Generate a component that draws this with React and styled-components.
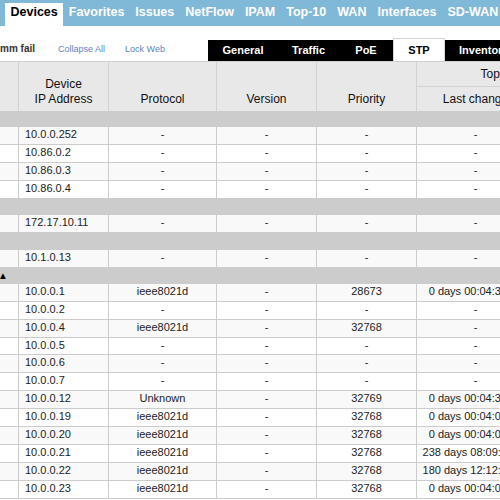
import React from 'react';
import styled, { createGlobalStyle } from 'styled-components';

const GlobalStyle = createGlobalStyle`
  html, body {
    margin: 0;
    padding: 0;
    background: #fff;
    overflow: hidden;
  }
  body {
    font-family: "Liberation Sans", Arial, sans-serif;
  }
`;

const COLS = '19px 90px 108px 100px 100px 118px 58px';

const Page = styled.div`
  width: 640px;
`;

const NavBar = styled.nav`
  display: flex;
  align-items: flex-end;
  height: 26px;
  padding-left: 5px;
  background: #80b8d8;
`;

const NavItem = styled.div`
  height: 23px;
  padding: 0 5.5px;
  line-height: 19px;
  font-size: 12.5px;
  font-weight: bold;
  white-space: nowrap;
  color: ${(p) => (p.$active ? '#000' : '#fff')};
  background: ${(p) => (p.$active ? '#fff' : 'transparent')};
`;

const Toolbar = styled.div`
  display: flex;
  align-items: flex-end;
  height: 35px;
`;

const ToolLinks = styled.div`
  flex-shrink: 0;
  width: 208px;
  height: 35px;
  box-sizing: border-box;
  padding-bottom: 5px;
  display: flex;
  align-items: flex-end;
`;

const Status = styled.span`
  font-size: 10px;
  font-weight: bold;
  line-height: 14px;
  color: #333;
  white-space: nowrap;
`;

const ToolLink = styled.span`
  margin-left: ${(p) => p.$gap}px;
  font-size: 9px;
  line-height: 14px;
  color: #5f82bf;
  white-space: nowrap;
`;

const TabStrip = styled.div`
  flex: 1;
  display: flex;
  align-items: flex-end;
  height: 21px;
  background: #000;
`;

const Tab = styled.div`
  flex-shrink: 0;
  box-sizing: border-box;
  ${(p) => (p.$width ? `width: ${p.$width}px;` : 'padding: 0 14px;')}
  height: ${(p) => (p.$active ? 23 : 21)}px;
  line-height: ${(p) => (p.$active ? 22 : 21)}px;
  text-align: center;
  font-size: 11px;
  font-weight: bold;
  white-space: nowrap;
  color: ${(p) => (p.$active ? '#000' : '#fff')};
  background: ${(p) => (p.$active ? '#fff' : 'transparent')};
  border: ${(p) => (p.$active ? '1px solid #d6d6d6' : 'none')};
  border-bottom: none;
`;

const Header = styled.div`
  display: grid;
  grid-template-columns: ${COLS};
  grid-template-rows: 25px 24px;
  border-top: 1px solid #cfcfcf;
  background: #e8e8e8;
`;

const HeadCell = styled.div`
  grid-column: ${(p) => p.$col};
  grid-row: ${(p) => p.$row};
  box-sizing: border-box;
  display: flex;
  flex-direction: column;
  align-items: center;
  justify-content: ${(p) => (p.$middle ? 'center' : 'flex-end')};
  padding-bottom: ${(p) => (p.$middle ? 0 : 4)}px;
  border-right: 1px solid #d2d2d2;
  border-bottom: ${(p) => (p.$divider ? '1px solid #d2d2d2' : 'none')};
  font-size: 12px;
  line-height: 15px;
  color: #111;
  white-space: nowrap;
  overflow: hidden;
`;

const GroupRow = styled.div`
  height: 16.4px;
  background: #cccccc;
  display: flex;
  align-items: center;
`;

const Caret = styled.span`
  font-family: "DejaVu Sans", sans-serif;
  font-size: 7.5px;
  line-height: 10px;
  color: #000;
`;

const Row = styled.div`
  display: grid;
  grid-template-columns: ${COLS};
  height: 17.9px;
  box-sizing: border-box;
  border-bottom: 1px solid #cccccc;
  background: ${(p) => (p.$shade ? '#f9f9f9' : '#ffffff')};
`;

const Cell = styled.div`
  box-sizing: border-box;
  display: flex;
  align-items: center;
  justify-content: ${(p) => (p.$left ? 'flex-start' : 'center')};
  padding: 0 ${(p) => (p.$left ? 6 : 0)}px 3px;
  border-right: 1px solid #cccccc;
  font-size: 11px;
  color: #222;
  white-space: nowrap;
  overflow: hidden;
`;

const navItems = ['Devices', 'Favorites', 'Issues', 'NetFlow', 'IPAM', 'Top-10', 'WAN', 'Interfaces', 'SD-WAN'];

const tabs = [
  { label: 'General', width: 70 },
  { label: 'Traffic', width: 61 },
  { label: 'PoE', width: 54 },
  { label: 'STP', width: 52, active: true },
  { label: 'Inventory' },
];

const D = '-';
const blank = (ip) => ({ ip, proto: D, ver: D, prio: D, last: D });

const groups = [
  {
    caret: false,
    rows: [blank('10.0.0.252'), blank('10.86.0.2'), blank('10.86.0.3'), blank('10.86.0.4')],
  },
  { caret: false, rows: [blank('172.17.10.11')] },
  { caret: false, rows: [blank('10.1.0.13')] },
  {
    caret: true,
    rows: [
      { ip: '10.0.0.1', proto: 'ieee8021d', ver: D, prio: '28673', last: '0 days 00:04:31.24' },
      blank('10.0.0.2'),
      { ip: '10.0.0.4', proto: 'ieee8021d', ver: D, prio: '32768', last: D },
      blank('10.0.0.5'),
      blank('10.0.0.6'),
      blank('10.0.0.7'),
      { ip: '10.0.0.12', proto: 'Unknown', ver: D, prio: '32769', last: '0 days 00:04:36.10' },
      { ip: '10.0.0.19', proto: 'ieee8021d', ver: D, prio: '32768', last: '0 days 00:04:05.52' },
      { ip: '10.0.0.20', proto: 'ieee8021d', ver: D, prio: '32768', last: '0 days 00:04:08.31' },
      { ip: '10.0.0.21', proto: 'ieee8021d', ver: D, prio: '32768', last: '238 days 08:09:17.44' },
      { ip: '10.0.0.22', proto: 'ieee8021d', ver: D, prio: '32768', last: '180 days 12:12:40.08' },
      { ip: '10.0.0.23', proto: 'ieee8021d', ver: D, prio: '32768', last: '0 days 00:04:02.95' },
    ],
  },
];

export default function App() {
  return (
    <Page>
      <GlobalStyle />
      <NavBar>
        {navItems.map((n) => (
          <NavItem key={n} $active={n === 'Devices'}>
            {n}
          </NavItem>
        ))}
      </NavBar>

      <Toolbar>
        <ToolLinks>
          <Status>mm fail</Status>
          <ToolLink $gap={23}>Collapse All</ToolLink>
          <ToolLink $gap={20}>Lock Web</ToolLink>
        </ToolLinks>
        <TabStrip>
          {tabs.map((t) => (
            <Tab key={t.label} $width={t.width} $active={t.active}>
              {t.label}
            </Tab>
          ))}
        </TabStrip>
      </Toolbar>

      <Header>
        <HeadCell $col="1" $row="1 / 3" />
        <HeadCell $col="2" $row="1 / 3">
          <span>Device</span>
          <span>IP Address</span>
        </HeadCell>
        <HeadCell $col="3" $row="1 / 3">Protocol</HeadCell>
        <HeadCell $col="4" $row="1 / 3">Version</HeadCell>
        <HeadCell $col="5" $row="1 / 3">Priority</HeadCell>
        <HeadCell $col="6 / 8" $row="1" $middle $divider>Topology</HeadCell>
        <HeadCell $col="6" $row="2" $middle>Last change</HeadCell>
        <HeadCell $col="7" $row="2" $middle>Changes</HeadCell>
      </Header>

      {groups.map((g, gi) => (
        <React.Fragment key={gi}>
          <GroupRow>{g.caret && <Caret>▲</Caret>}</GroupRow>
          {g.rows.map((r, ri) => (
            <Row key={r.ip} $shade={ri % 2 === 0}>
              <Cell />
              <Cell $left>{r.ip}</Cell>
              <Cell>{r.proto}</Cell>
              <Cell>{r.ver}</Cell>
              <Cell>{r.prio}</Cell>
              <Cell>{r.last}</Cell>
              <Cell>{D}</Cell>
            </Row>
          ))}
        </React.Fragment>
      ))}
    </Page>
  );
}
